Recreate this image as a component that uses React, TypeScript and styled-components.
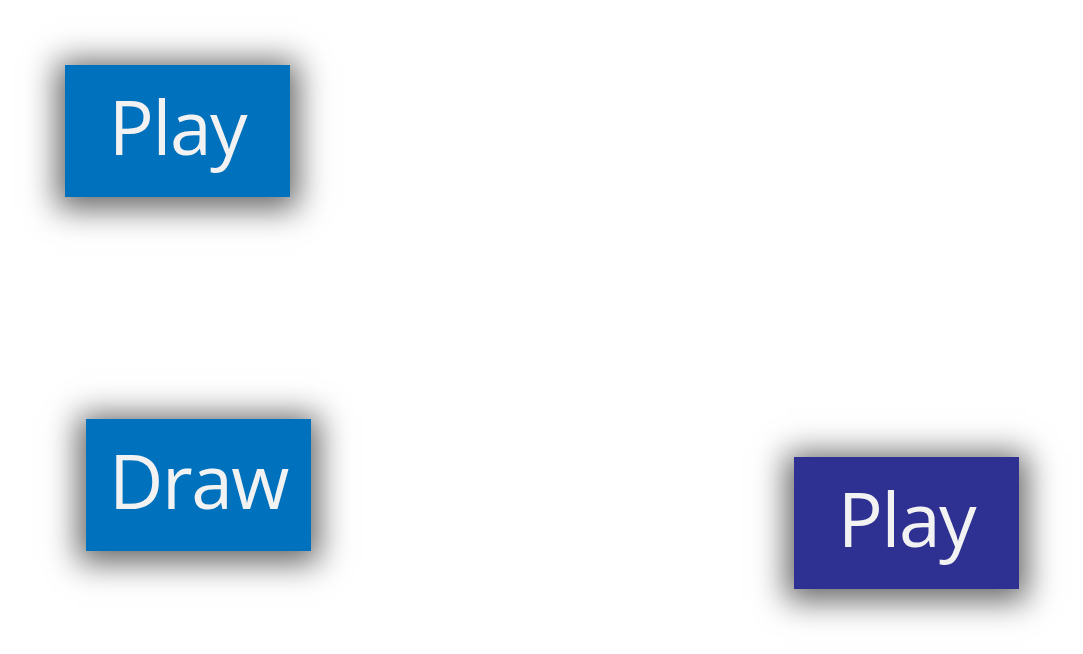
import styled, { createGlobalStyle } from "styled-components"

interface ButtonProp {
  $tone?: "blue" | "indigo"
  $indent?: number
}

const labels = {
  play: "Play",
  draw: "Draw",
}

export default function App() {

  return(
    <>
      <GlobalStyle />
      <Board>
        <LeftColumn>
          <CanvasButton type="button">{labels.play}</CanvasButton>
          <CanvasButton type="button" $indent={21}>{labels.draw}</CanvasButton>
        </LeftColumn>
        <RightColumn>
          <CanvasButton type="button" $tone="indigo">{labels.play}</CanvasButton>
        </RightColumn>
      </Board>
    </>
  )
}

//style

const GlobalStyle = createGlobalStyle`
  html, body {
    margin: 0;
    padding: 0;
    background: #ffffff;
  }
`

const Board = styled.div`
  display: flex;
  align-items: flex-start;
  width: 1083px;
  height: 654px;
  padding: 65px 0 0 65px;
  box-sizing: border-box;
  overflow: hidden;
`

const LeftColumn = styled.div`
  display: flex;
  flex-direction: column;
  align-items: flex-start;
  gap: 222px;
  width: 245px;
`

const RightColumn = styled.div`
  margin-left: 484px;
  padding-top: 392px;
`

const CanvasButton = styled.button<ButtonProp>`
  display: flex;
  align-items: center;
  justify-content: center;
  width: 225px;
  height: 132px;
  margin-left: ${(p) => p.$indent || 0}px;
  padding: 0 0 10px;
  border: none;
  border-radius: 0;
  background: ${(p) => (p.$tone === "indigo" ? "#2e3192" : "#0071bc")};
  box-shadow: 0 4px 30px 8px rgba(0, 0, 0, 0.6);
  color: #f2f2f2;
  font-family: "Open Sans", "Noto Sans", sans-serif;
  font-size: 75px;
  letter-spacing: -1.5px;
  line-height: 1;
  cursor: pointer;
`
